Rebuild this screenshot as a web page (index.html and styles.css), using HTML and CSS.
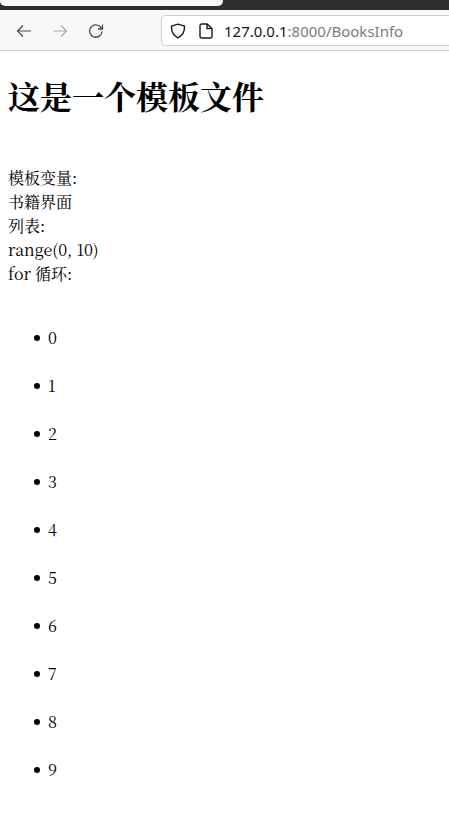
FILE: index.html
```html
<!DOCTYPE html>
<html lang="zh-CN">
<head>
<meta charset="utf-8">
<title>BooksInfo</title>
<link rel="stylesheet" href="styles.css">
</head>
<body>
<header class="chrome">
  <div class="tabstrip"><div class="tab"></div></div>
  <div class="toolbar">
    <div class="navs">
      <svg class="icon" viewBox="0 0 16 16"><path d="M15 8H1.500M7 2.500 1.500 8 7 13.500" fill="none" stroke="#4a4a4f" stroke-width="1.200"/></svg>
      <svg class="icon" viewBox="0 0 16 16"><path d="M1 8h13.500M9 2.500 14.500 8 9 13.500" fill="none" stroke="#ababad" stroke-width="1.200"/></svg>
      <svg class="icon" viewBox="0 0 16 16"><path d="M14 8.500A6.200 6.200 0 1 1 11.800 3.300L14.200 5.800M14.500 1.500v4.500H10" fill="none" stroke="#4a4a4f" stroke-width="1.300"/></svg>
    </div>
    <div class="urlbar">
      <svg class="shield" viewBox="0 0 16 16"><path d="M8 1.200 14.500 3c.3 5.500-1.800 9.500-6.500 11.800C3.300 12.500 1.200 8.500 1.500 3Z" fill="none" stroke="#1c1b22" stroke-width="1.400"/></svg>
      <svg class="page" viewBox="0 0 14 16"><path d="M2.800 1h5.400L13 5.500v7.700A1.800 1.800 0 0 1 11.200 15H2.800A1.800 1.800 0 0 1 1 13.200V2.800A1.800 1.800 0 0 1 2.800 1ZM8 1v4.500h5" fill="none" stroke="#1c1b22" stroke-width="1.400"/></svg>
      <span class="url"><span class="host">127.0.0.1</span>:8000/BooksInfo</span>
    </div>
  </div>
</header>
<main class="content">
  <h1>这是一个模板文件</h1>
  <p class="info">模板变量:<br>书籍界面<br>列表:<br>range(0, 10)<br>for 循环:</p>
  <ul>
    <li><p>0</p></li>
    <li><p>1</p></li>
    <li><p>2</p></li>
    <li><p>3</p></li>
    <li><p>4</p></li>
    <li><p>5</p></li>
    <li><p>6</p></li>
    <li><p>7</p></li>
    <li><p>8</p></li>
    <li><p>9</p></li>
  </ul>
</main>
</body>
</html>
```
FILE: styles.css
```css
html, body {
  margin: 0;
  background: #fff;
  overflow: hidden;
}
body {
  height: 814px;
  font-family: "Noto Serif CJK SC", "Liberation Serif", "Noto Sans CJK SC", serif;
  color: #000;
}
.chrome {
  font-family: "Noto Sans", "Open Sans", sans-serif;
}
.tabstrip {
  height: 10px;
  background: #2f2d2e;
}
.tab {
  width: 223px;
  height: 6px;
  background: #f8f8f8;
  border-radius: 0 0 5px 5px;
}
.toolbar {
  height: 40px;
  background: #f8f8f8;
  border-bottom: 1px solid #cfcfd1;
  display: flex;
  align-items: center;
  overflow: hidden;
}
.navs {
  display: flex;
  gap: 20px;
  padding: 2px 0 0 16px;
  width: 145px;
  flex: none;
}
.navs .icon {
  width: 16px;
  height: 16px;
}
.urlbar {
  flex: none;
  width: 400px;
  height: 31px;
  background: #fff;
  border: 1px solid #cfcfd3;
  border-radius: 4px;
  display: flex;
  align-items: center;
  padding: 2px 0 0 8px;
  box-sizing: border-box;
}
.shield {
  width: 16px;
  height: 16px;
  margin-right: 13px;
}
.page {
  width: 14px;
  height: 16px;
  margin-right: 11px;
}
.url {
  font-size: 15px;
  color: #7b7b7b;
  white-space: nowrap;
}
.host {
  color: #15141a;
}
.content {
  padding: 0 8px;
}
h1 {
  font-size: 32px;
  line-height: 46px;
  margin: 21px 0 48px;
}
.info {
  font-size: 16px;
  line-height: 24px;
  margin: 0;
}
ul {
  margin: 40px 0 32px;
  padding-left: 40px;
  list-style: none;
}
li {
  position: relative;
  font-size: 16px;
  line-height: 24px;
}
li::before {
  content: "";
  position: absolute;
  left: -14px;
  top: 9px;
  width: 6px;
  height: 6px;
  border-radius: 50%;
  background: #000;
}
li p {
  margin: 24px 0;
}
```
